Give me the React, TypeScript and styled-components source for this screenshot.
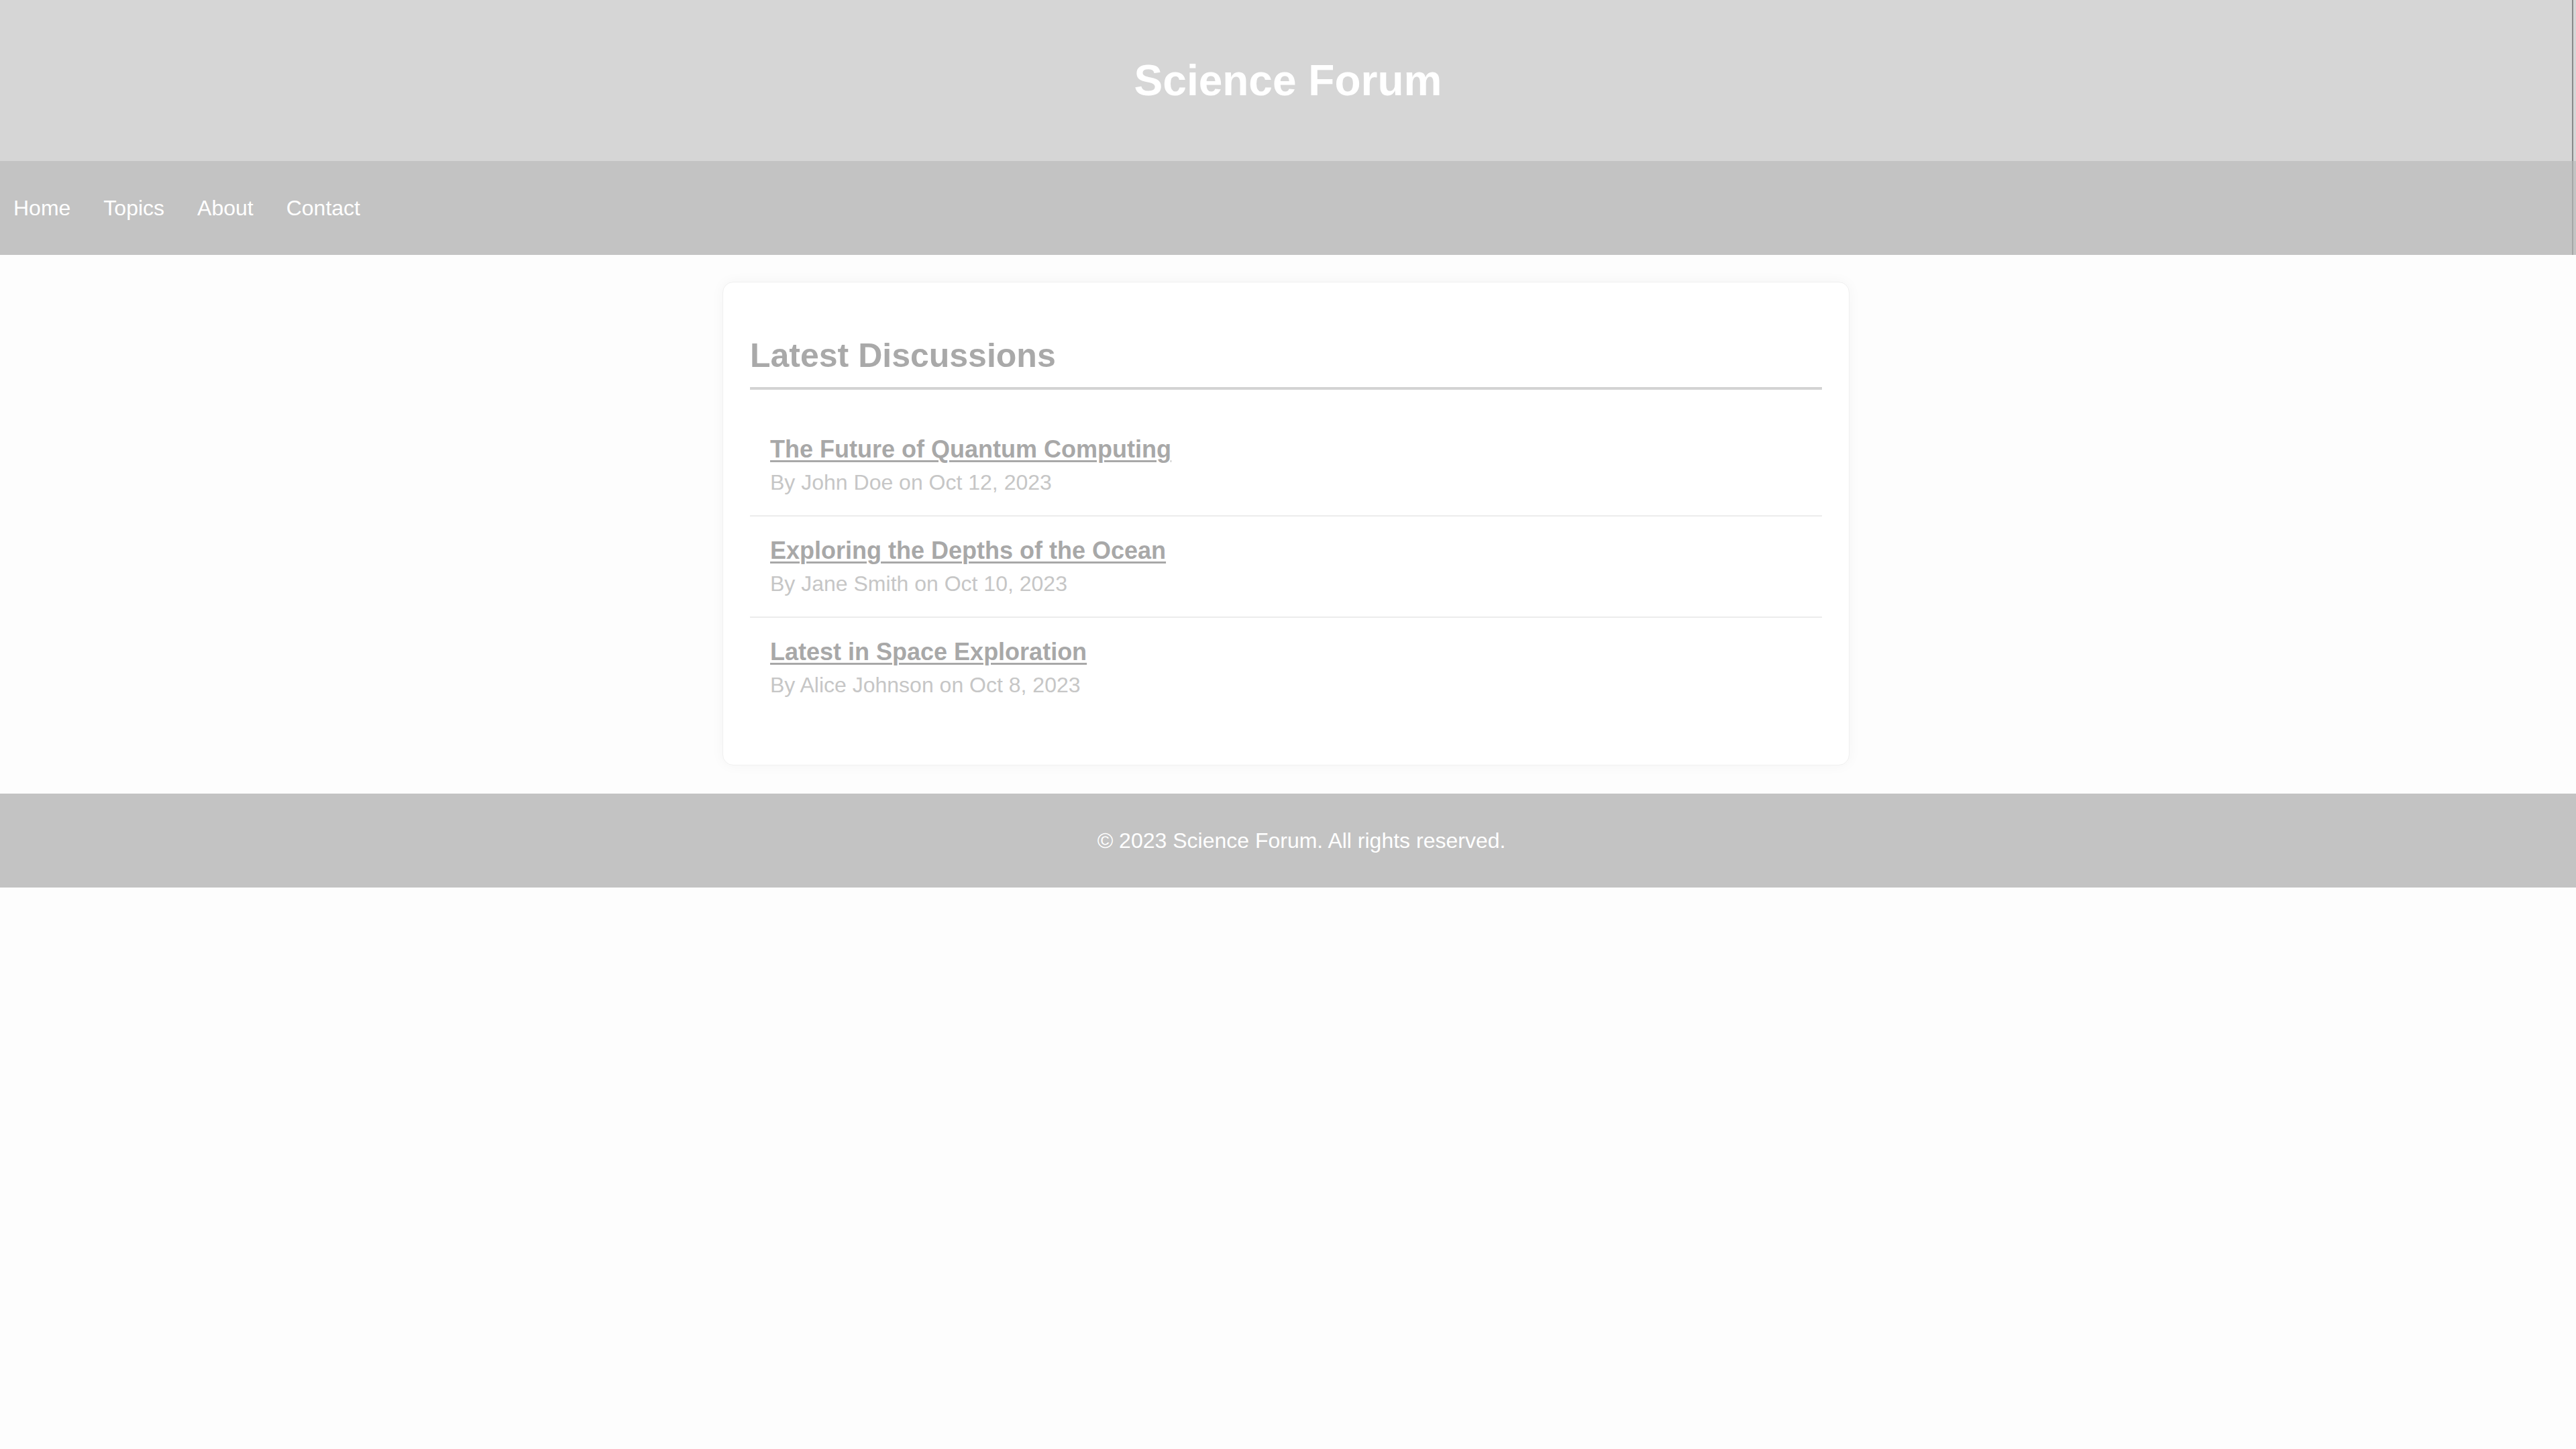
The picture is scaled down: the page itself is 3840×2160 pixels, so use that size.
import styled, { createGlobalStyle } from "styled-components";

const GlobalStyle = createGlobalStyle`
    html, body {
        margin: 0;
        padding: 0;
        background: #fdfdfd;
        font-family: "Liberation Sans", Arial, sans-serif;
    }
    * {
        box-sizing: border-box;
    }
`

interface Discussion {
    title: string;
    author: string;
    date: string;
}

const discussions: Discussion[] = [
    { title: 'The Future of Quantum Computing', author: 'John Doe', date: 'Oct 12, 2023' },
    { title: 'Exploring the Depths of the Ocean', author: 'Jane Smith', date: 'Oct 10, 2023' },
    { title: 'Latest in Space Exploration', author: 'Alice Johnson', date: 'Oct 8, 2023' },
];

const navLinks = ['Home', 'Topics', 'About', 'Contact'];

function App() {
    return (
        <>
            <GlobalStyle />
            <Header>
                <SiteTitle>Science Forum</SiteTitle>
            </Header>
            <Nav>
                {navLinks.map((link) => (
                    <NavLink key={link} href="#">{link}</NavLink>
                ))}
            </Nav>
            <Main>
                <Card>
                    <CardTitle>Latest Discussions</CardTitle>
                    <DiscussionList>
                        {discussions.map((elem, i) => (
                            <DiscussionItem key={elem.title} last={i === discussions.length - 1}>
                                <DiscussionTitle href="#">{elem.title}</DiscussionTitle>
                                <DiscussionMeta>By {elem.author} on {elem.date}</DiscussionMeta>
                            </DiscussionItem>
                        ))}
                    </DiscussionList>
                </Card>
            </Main>
            <Footer>
                <FooterText>© 2023 Science Forum. All rights reserved.</FooterText>
            </Footer>
        </>
    )
}

const Header = styled.header`
    height: 240px;
    display: flex;
    align-items: center;
    justify-content: center;
    background: linear-gradient(to left, #d6d6d6 4px, #8a8a8a 4px, #8a8a8a 6px, #d6d6d6 6px);
`
const SiteTitle = styled.h1`
    margin: 0;
    font-size: 64px;
    font-weight: 700;
    color: #ffffff;
`
const Nav = styled.nav`
    height: 140px;
    display: flex;
    align-items: center;
    gap: 49px;
    padding-left: 20px;
    background: linear-gradient(to left, #c3c3c3 4px, #a6a6a6 4px, #a6a6a6 6px, #c3c3c3 6px);
`
const NavLink = styled.a`
    font-size: 32px;
    color: #ffffff;
    text-decoration: none;
`
const Main = styled.main`
    padding: 40px 6px 42px 0;
`
const Card = styled.section`
    width: 1680px;
    margin: 0 auto;
    padding: 40px;
    background: #ffffff;
    border: 1px solid #f0f0f0;
    border-radius: 16px;
    box-shadow: 0 0 20px rgba(0, 0, 0, 0.04);
`
const CardTitle = styled.h2`
    margin: 40px 0 38px;
    padding-bottom: 18px;
    font-size: 50px;
    font-weight: 700;
    color: #a9a9a9;
    border-bottom: 4px solid #d3d3d3;
`
const DiscussionList = styled.ul`
    list-style: none;
    margin: 30px 0;
    padding: 0;
`
interface IDiscussionItem {
    last: boolean;
}
const DiscussionItem = styled.li<IDiscussionItem>`
    padding: 30px 30px;
    border-bottom: ${props => props.last ? 'none' : '2px solid #ececec'};
`
const DiscussionTitle = styled.a`
    display: block;
    width: max-content;
    font-size: 36px;
    font-weight: 700;
    color: #a8a8a8;
    text-decoration: underline;
    text-decoration-thickness: 3px;
    text-underline-offset: 4px;
`
const DiscussionMeta = styled.p`
    margin: 10px 0 0;
    font-size: 32px;
    color: #c6c6c6;
`
const Footer = styled.footer`
    height: 140px;
    display: flex;
    align-items: center;
    justify-content: center;
    padding-left: 40px;
    background: #c3c3c3;
`
const FooterText = styled.p`
    margin: 0;
    font-size: 32px;
    color: #ffffff;
`

export default App;
